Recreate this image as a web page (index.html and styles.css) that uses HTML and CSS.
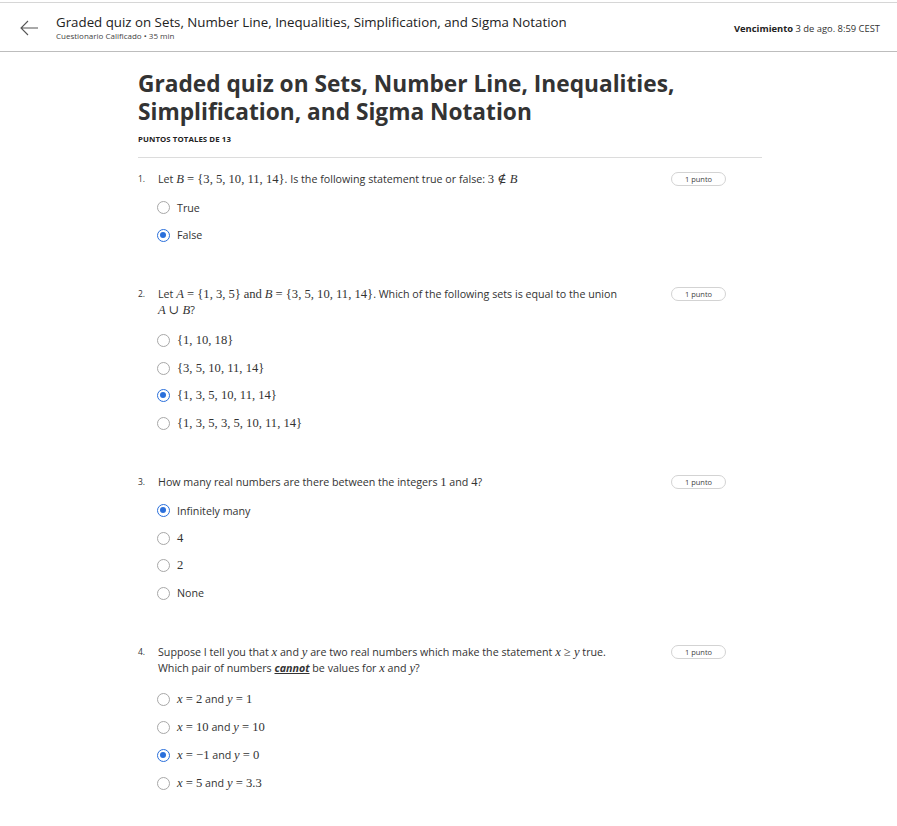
FILE: index.html
```html
<!DOCTYPE html>
<html lang="es">
<head>
<meta charset="utf-8">
<title>Graded quiz</title>
<link rel="stylesheet" href="styles.css">
</head>
<body>
<header class="topbar">
  <div class="back">
    <svg width="20" height="16" viewBox="0 0 20 16"><path d="M19 8H2M9 1L2 8l7 7" fill="none" stroke="#555" stroke-width="1.1"/></svg>
  </div>
  <div class="titles">
    <div class="t-main">Graded quiz on Sets, Number Line, Inequalities, Simplification, and Sigma Notation</div>
    <div class="t-sub">Cuestionario Calificado • 35 min</div>
  </div>
  <div class="due"><b>Vencimiento</b> 3 de ago. 8:59 CEST</div>
</header>

<main class="content">
  <h1 class="heading">Graded quiz on Sets, Number Line, Inequalities, Simplification, and Sigma Notation</h1>
  <div class="total">PUNTOS TOTALES DE 13</div>
  <hr class="rule">

  <section class="q">
    <div class="q-row">
      <span class="num">1.</span>
      <div class="q-text">Let <span class="m"><i>B</i> = {3, 5, 10, 11, 14}</span>. Is the following statement true or false: <span class="m">3 ∉ <i>B</i></span></div>
      <span class="badge">1 punto</span>
    </div>
    <ul class="opts">
      <li class="opt"><span class="radio"></span>True</li>
      <li class="opt"><span class="radio on"></span>False</li>
    </ul>
  </section>

  <section class="q">
    <div class="q-row">
      <span class="num">2.</span>
      <div class="q-text">Let <span class="m"><i>A</i> = {1, 3, 5}</span> <span class="m">and</span> <span class="m"><i>B</i> = {3, 5, 10, 11, 14}</span>. Which of the following sets is equal to the union <span class="nw"><span class="m"><i>A</i> ∪ <i>B</i></span>?</span></div>
      <span class="badge">1 punto</span>
    </div>
    <ul class="opts opts-two">
      <li class="opt"><span class="radio"></span><span class="m">{1, 10, 18}</span></li>
      <li class="opt"><span class="radio"></span><span class="m">{3, 5, 10, 11, 14}</span></li>
      <li class="opt"><span class="radio on"></span><span class="m">{1, 3, 5, 10, 11, 14}</span></li>
      <li class="opt"><span class="radio"></span><span class="m">{1, 3, 5, 3, 5, 10, 11, 14}</span></li>
    </ul>
  </section>

  <section class="q">
    <div class="q-row">
      <span class="num">3.</span>
      <div class="q-text">How many real numbers are there between the integers <span class="m">1</span> and <span class="m">4</span>?</div>
      <span class="badge">1 punto</span>
    </div>
    <ul class="opts">
      <li class="opt"><span class="radio on"></span>Infinitely many</li>
      <li class="opt"><span class="radio"></span><span class="m">4</span></li>
      <li class="opt"><span class="radio"></span><span class="m">2</span></li>
      <li class="opt"><span class="radio"></span>None</li>
    </ul>
  </section>

  <section class="q">
    <div class="q-row">
      <span class="num">4.</span>
      <div class="q-text">Suppose I tell you that <span class="m"><i>x</i></span> and <span class="m"><i>y</i></span> are two real numbers which make the statement <span class="m"><i>x</i> ≥ <i>y</i></span> true. Which pair of numbers <em class="stress">cannot</em> be values for <span class="m"><i>x</i></span> and <span class="m"><i>y</i></span>?</div>
      <span class="badge">1 punto</span>
    </div>
    <ul class="opts opts-two opts-tall">
      <li class="opt"><span class="radio"></span><span class="m"><i>x</i> = 2</span>&nbsp;and&nbsp;<span class="m"><i>y</i> = 1</span></li>
      <li class="opt"><span class="radio"></span><span class="m"><i>x</i> = 10</span>&nbsp;and&nbsp;<span class="m"><i>y</i> = 10</span></li>
      <li class="opt"><span class="radio on"></span><span class="m"><i>x</i> = −1</span>&nbsp;and&nbsp;<span class="m"><i>y</i> = 0</span></li>
      <li class="opt"><span class="radio"></span><span class="m"><i>x</i> = 5</span>&nbsp;and&nbsp;<span class="m"><i>y</i> = 3.3</span></li>
    </ul>
  </section>
</main>
</body>
</html>
```

FILE: styles.css
```css
* { box-sizing: border-box; }
html, body { margin: 0; padding: 0; background: #fff; }
body {
  font-family: "Open Sans", "Liberation Sans", sans-serif;
  color: #333;
  padding-top: 2px;
}

.topbar {
  display: flex;
  align-items: center;
  height: 50px;
  border-top: 1px solid #d6d6d6;
  border-bottom: 1px solid #bdbdbd;
  padding: 0 17px 0 19px;
}
.back { width: 37px; display: flex; align-items: center; padding-top: 2px; }
.titles { flex: 1; }
.t-main { font-size: 13.3px; color: #222; line-height: 17px; }
.t-sub { font-size: 8px; color: #444; line-height: 10px; }
.due { font-size: 9.4px; color: #333; padding-top: 2px; }
.due b { font-weight: 700; color: #222; }

.content {
  width: 624px;
  margin-left: 138px;
  padding-top: 18px;
}
.heading {
  margin: 0;
  font-size: 22.7px;
  line-height: 28px;
  font-weight: 700;
  color: #333;
}
.total {
  margin-top: 8px;
  font-size: 7.8px;
  font-weight: 700;
  color: #222;
  letter-spacing: 0.1px;
}
.rule {
  border: 0;
  border-top: 1px solid #dcdcdc;
  margin: 13px 0 0 0;
}

.q { padding-top: 13px; padding-bottom: 24px; }
.q-row {
  display: flex;
  align-items: flex-start;
  padding-right: 36px;
}
.num { width: 20px; font-size: 8.5px; line-height: 16px; color: #333; }
.q-text { width: 480px; font-size: 10.7px; line-height: 16px; color: #333; }
.nw { white-space: nowrap; }
.badge {
  margin-left: auto;
  margin-top: 1px;
  width: 55px;
  height: 14px;
  border: 1px solid #d3d3d3;
  border-radius: 8px;
  font-size: 7.5px;
  line-height: 12px;
  text-align: center;
  color: #444;
}
.m { font-family: "Liberation Serif", "DejaVu Serif", serif; font-size: 1.18em; color: #333; }
.m i { font-style: italic; }
.stress { font-weight: 700; font-style: italic; text-decoration: underline; }

.opts { list-style: none; margin: 7px 0 0 0; padding: 0 0 0 19px; }
.opts-two { margin-top: 9px; }
.opt {
  display: flex;
  align-items: center;
  height: 27.5px;
  font-size: 10.7px;
  color: #333;
}
.opts-tall .opt { height: 28px; }
.radio {
  width: 13px;
  height: 13px;
  border-radius: 50%;
  border: 1.3px solid #a8a8a8;
  margin-right: 7px;
  flex: none;
  position: relative;
}
.radio.on { border: 1.6px solid #2a6fdb; }
.radio.on::after {
  content: "";
  position: absolute;
  left: 2px; top: 2px;
  width: 6px; height: 6px;
  border-radius: 50%;
  background: #2a6fdb;
}
```
